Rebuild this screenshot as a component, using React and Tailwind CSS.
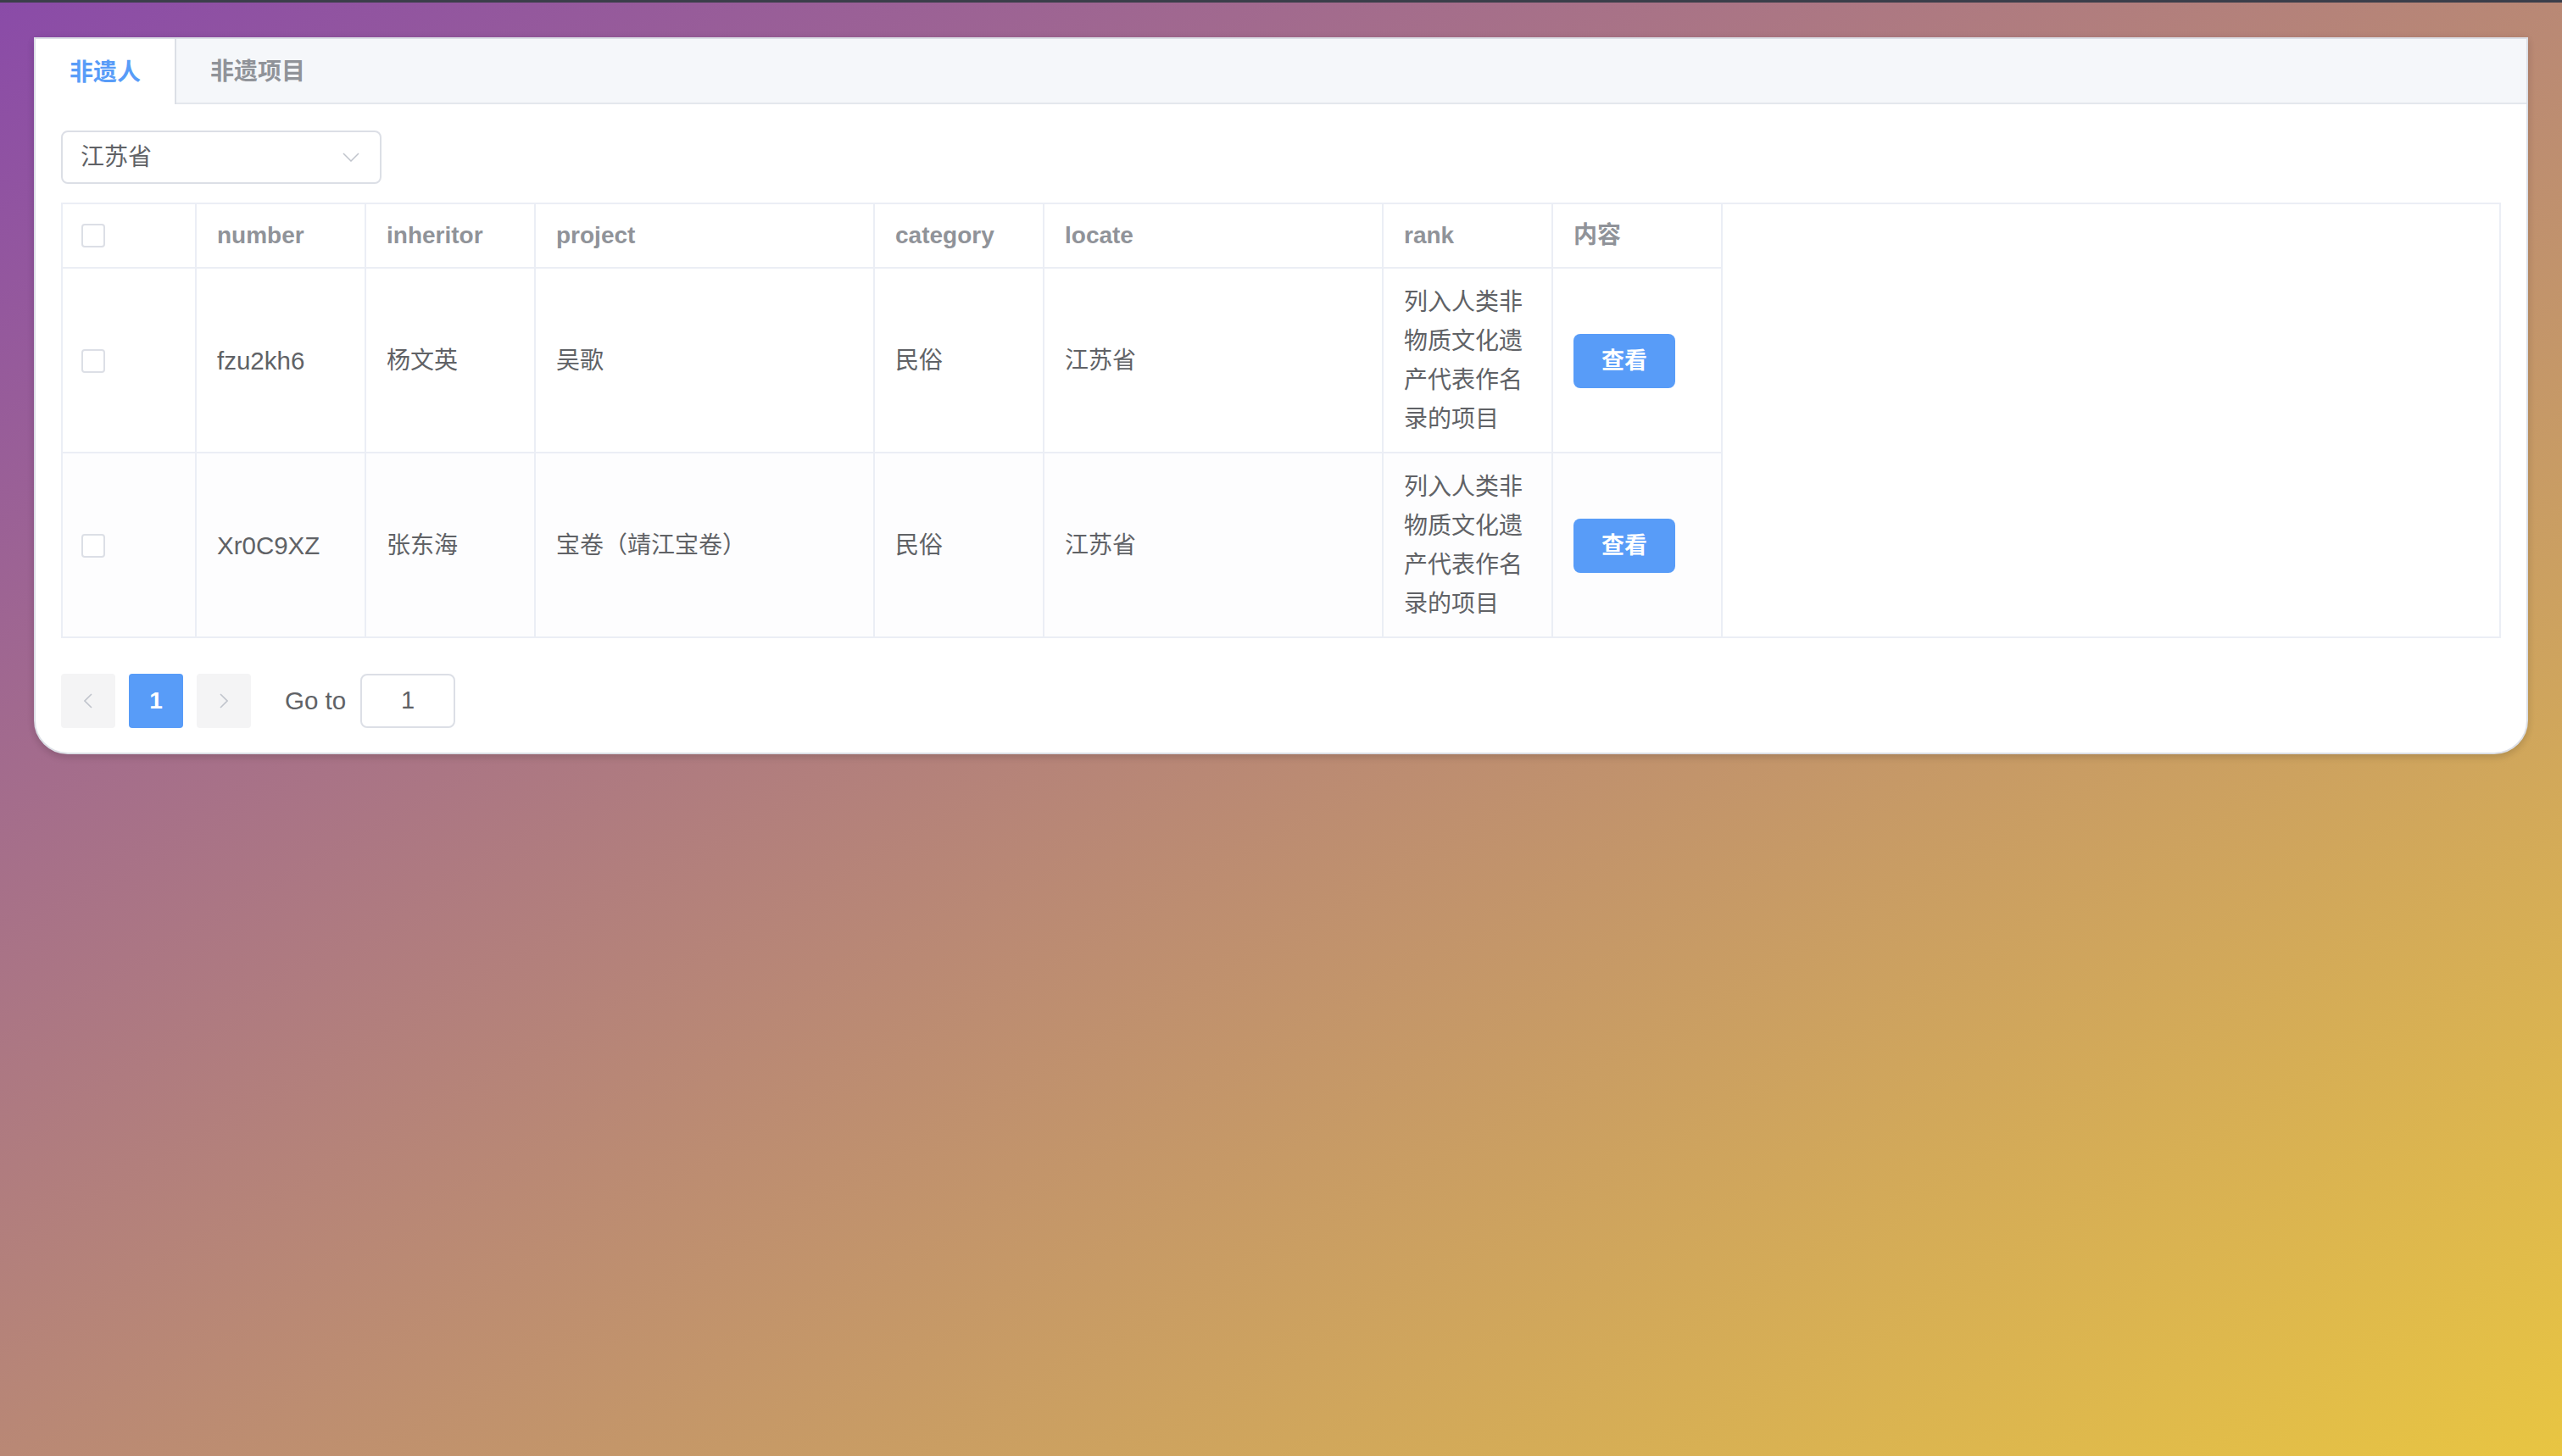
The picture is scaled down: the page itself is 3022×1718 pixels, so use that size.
import React from "react";

const FONT = "font-['Liberation_Sans','Noto_Sans_CJK_SC',sans-serif]";

const rows = [
  { number: "fzu2kh6", inheritor: "杨文英", project: "吴歌", category: "民俗", locate: "江苏省", rank: "列入人类非物质文化遗产代表作名录的项目" },
  { number: "Xr0C9XZ", inheritor: "张东海", project: "宝卷（靖江宝卷）", category: "民俗", locate: "江苏省", rank: "列入人类非物质文化遗产代表作名录的项目" },
];

function Checkbox() {
  return <div className="w-[28px] h-[28px] rounded-[4px] border-2 border-[#dcdfe6] bg-white" />;
}

function Chevron({ dir }) {
  const d = dir === "left" ? "M9 1 L1 9 L9 17" : "M1 1 L9 9 L1 17";
  return (
    <svg width="10" height="18" viewBox="0 0 10 18" fill="none">
      <path d={d} stroke="#c0c4cc" strokeWidth="1.6" />
    </svg>
  );
}

const cellBase = "shrink-0 border-r-2 border-[#ebeef5] flex items-center";

export default function App() {
  return (
    <div className={`min-h-screen w-full bg-[linear-gradient(to_bottom_right,#8a4ba8,#e8c542)] ${FONT}`}>
      <div className="h-[3px] bg-[#3b3e4a]" />
      <div className="mx-[40px] mt-[41px] bg-white border-2 border-[#dcdfe6] rounded-b-[40px] shadow-[0_4px_8px_rgba(0,0,0,0.12),0_0_12px_rgba(0,0,0,0.04)] overflow-hidden">
        {/* tabs header */}
        <div className="flex h-[77px] bg-[#f5f7fa]">
          <div className="flex items-center pt-[2px] px-[40px] bg-white border-r-2 border-[#dcdfe6] text-[28px] font-semibold text-[#589cf8]">
            非遗人
          </div>
          <div className="flex-1 flex border-b-2 border-[#e4e7ed]">
            <div className="flex items-center pt-[2px] px-[40px] text-[28px] font-semibold text-[#909399]">非遗项目</div>
          </div>
        </div>

        {/* content */}
        <div className="px-[30px] pt-[31px] pb-[29px]">
          {/* select */}
          <div className="w-[378px] h-[63px] border-2 border-[#dcdfe6] rounded-[8px] flex items-center justify-between pl-[21px] pr-[24px]">
            <span className="text-[28px] text-[#606266]">江苏省</span>
            <svg width="20" height="11" viewBox="0 0 20 11" fill="none">
              <path d="M1 1 L10 10 L19 1" stroke="#c0c4cc" strokeWidth="1.5" />
            </svg>
          </div>

          {/* table */}
          <div className="mt-[22px] border-2 border-[#ebeef5] text-[28px]">
            <div className="flex h-[76px]">
              <div className={`${cellBase} border-b-2 w-[158px] pl-[22px]`}><Checkbox /></div>
              <div className={`${cellBase} border-b-2 w-[200px] pl-[24px] font-semibold text-[#909399]`}>number</div>
              <div className={`${cellBase} border-b-2 w-[200px] pl-[24px] font-semibold text-[#909399]`}>inheritor</div>
              <div className={`${cellBase} border-b-2 w-[400px] pl-[24px] font-semibold text-[#909399]`}>project</div>
              <div className={`${cellBase} border-b-2 w-[200px] pl-[24px] font-semibold text-[#909399]`}>category</div>
              <div className={`${cellBase} border-b-2 w-[400px] pl-[24px] font-semibold text-[#909399]`}>locate</div>
              <div className={`${cellBase} border-b-2 w-[200px] pl-[24px] font-semibold text-[#909399]`}>rank</div>
              <div className={`${cellBase} border-b-2 w-[200px] pl-[24px] font-semibold text-[#909399]`}>内容</div>
            </div>
            {rows.map((r, i) => {
              const last = i === rows.length - 1;
              const rowCls = last ? "h-[216px]" : "h-[218px]";
              const cb = last ? "bg-[#fdfdfe]" : "border-b-2 bg-white";
              return (
                <div key={i} className={`flex ${rowCls}`}>
                  <div className={`${cellBase} ${cb} w-[158px] pl-[22px] pt-[2px]`}><Checkbox /></div>
                  <div className={`${cellBase} ${cb} w-[200px] pl-[24px] pt-[2px] text-[29.5px] text-[#606266]`}>{r.number}</div>
                  <div className={`${cellBase} ${cb} w-[200px] pl-[24px] pt-[2px] text-[#606266]`}>{r.inheritor}</div>
                  <div className={`${cellBase} ${cb} w-[400px] pl-[24px] pt-[2px] text-[#606266]`}>{r.project}</div>
                  <div className={`${cellBase} ${cb} w-[200px] pl-[24px] pt-[2px] text-[#606266]`}>{r.category}</div>
                  <div className={`${cellBase} ${cb} w-[400px] pl-[24px] pt-[2px] text-[#606266]`}>{r.locate}</div>
                  <div className={`${cellBase} ${cb} w-[200px] pl-[24px] pr-[24px] pt-[2px] text-[#606266]`}>
                    <div className="leading-[46px] break-all">{r.rank}</div>
                  </div>
                  <div className={`${cellBase} ${cb} w-[200px] pl-[24px] pt-[2px]`}>
                    <button className="w-[120px] h-[64px] rounded-[8px] bg-[#589cf8] text-white text-[27px] font-bold flex items-center justify-center">
                      查看
                    </button>
                  </div>
                </div>
              );
            })}
          </div>

          {/* pagination */}
          <div className="mt-[42px] flex items-center h-[64px]">
            <div className="w-[64px] h-[64px] rounded-[4px] bg-[#f4f4f5] flex items-center justify-center"><Chevron dir="left" /></div>
            <div className="ml-[16px] w-[64px] h-[64px] rounded-[4px] bg-[#589cf8] text-white text-[28px] font-bold flex items-center justify-center">1</div>
            <div className="ml-[16px] w-[64px] h-[64px] rounded-[4px] bg-[#f4f4f5] flex items-center justify-center"><Chevron dir="right" /></div>
            <span className="ml-[40px] text-[29.5px] text-[#606266]">Go to</span>
            <div className="ml-[17px] w-[112px] h-[64px] border-2 border-[#dcdfe6] rounded-[8px] flex items-center justify-center text-[29px] text-[#606266]">1</div>
          </div>
        </div>
      </div>
    </div>
  );
}
